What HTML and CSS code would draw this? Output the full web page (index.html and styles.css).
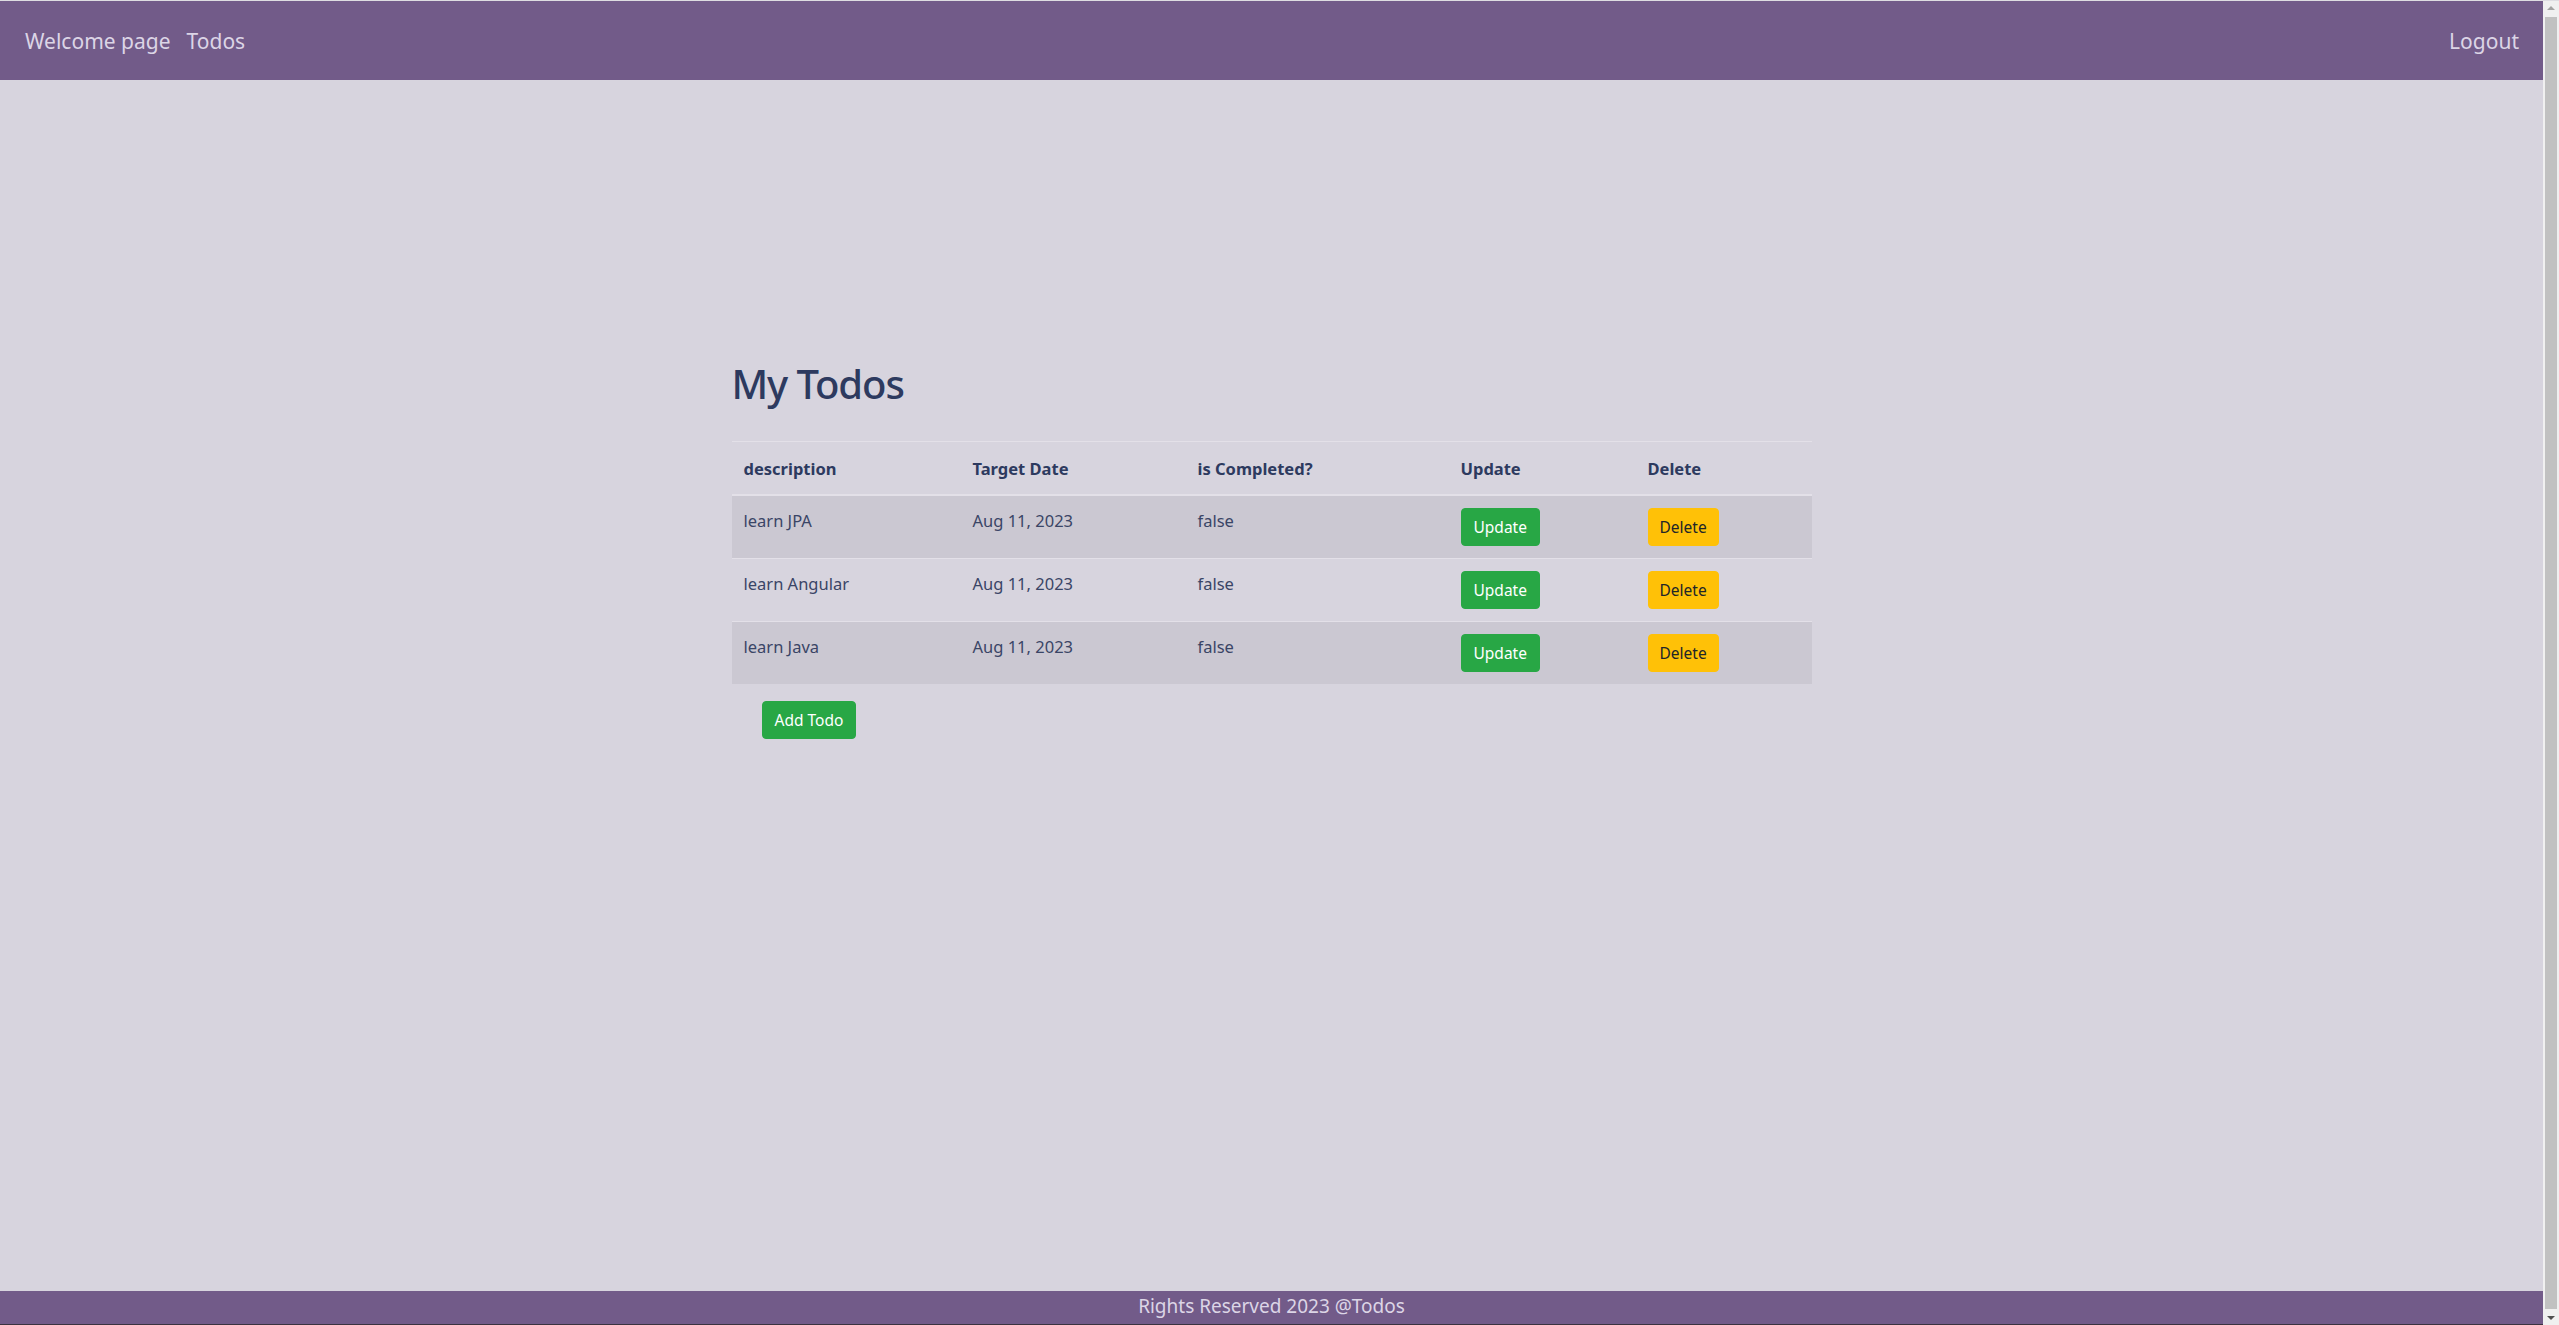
FILE: index.html
```html
<!DOCTYPE html>
<html lang="en">
<head>
<meta charset="utf-8">
<title>Todos</title>
<link rel="stylesheet" href="styles.css">
</head>
<body>
<div class="window">
  <div class="page">
    <header class="navbar">
      <nav class="nav-left">
        <a class="nav-link" href="#">Welcome page</a>
        <a class="nav-link" href="#">Todos</a>
      </nav>
      <a class="nav-link" href="#">Logout</a>
    </header>
    <main class="main">
      <div class="container">
        <h1 class="title">My Todos</h1>
        <table class="todo-table">
          <thead>
            <tr>
              <th class="c1">description</th>
              <th class="c2">Target Date</th>
              <th class="c3">is Completed?</th>
              <th class="c4">Update</th>
              <th class="c5">Delete</th>
            </tr>
          </thead>
          <tbody>
            <tr class="odd">
              <td>learn JPA</td>
              <td>Aug 11, 2023</td>
              <td>false</td>
              <td><button class="btn btn-success">Update</button></td>
              <td><button class="btn btn-warning">Delete</button></td>
            </tr>
            <tr>
              <td>learn Angular</td>
              <td>Aug 11, 2023</td>
              <td>false</td>
              <td><button class="btn btn-success">Update</button></td>
              <td><button class="btn btn-warning">Delete</button></td>
            </tr>
            <tr class="odd">
              <td>learn Java</td>
              <td>Aug 11, 2023</td>
              <td>false</td>
              <td><button class="btn btn-success">Update</button></td>
              <td><button class="btn btn-warning">Delete</button></td>
            </tr>
          </tbody>
        </table>
        <button class="btn btn-success add-btn">Add Todo</button>
      </div>
    </main>
    <footer class="footer">Rights Reserved 2023 @Todos</footer>
  </div>
  <div class="scrollbar">
    <div class="arrow arrow-up"></div>
    <div class="thumb"></div>
    <div class="arrow arrow-down"></div>
  </div>
</div>
</body>
</html>
```

FILE: styles.css
```css
html, body {
  margin: 0;
  padding: 0;
  height: 1325px;
  overflow: hidden;
}

body {
  font-family: "Noto Sans", "Open Sans", "DejaVu Sans", sans-serif;
  color: #2d3a5f;
  background: #d7d4de;
}

.window {
  display: flex;
  height: 1325px;
  border-top: 1px solid #dedde2;
  box-sizing: border-box;
}

.page {
  flex: 1;
  display: flex;
  flex-direction: column;
  min-width: 0;
}

.navbar {
  height: 79px;
  background: #725b89;
  display: flex;
  align-items: center;
  justify-content: space-between;
  padding: 0 24px 0 25px;
  flex-shrink: 0;
}

.nav-left {
  display: flex;
  gap: 16px;
}

.nav-link {
  color: #dcd5e6;
  text-decoration: none;
  font-size: 21px;
  line-height: 30px;
}

.main {
  flex: 1;
}

.container {
  width: 1080px;
  margin: 0 auto;
  padding-top: 280px;
}

.title {
  font-size: 40px;
  font-weight: 500;
  line-height: 48px;
  letter-spacing: -1.1px;
  margin: 0 0 33px;
  color: #2d3a5f;
}

.todo-table {
  width: 1080px;
  table-layout: fixed;
  border-collapse: collapse;
  font-size: 16.5px;
  line-height: 26px;
}

.todo-table th,
.todo-table td {
  box-sizing: border-box;
  text-align: left;
  vertical-align: top;
  padding: 12px;
  border-top: 1px solid #e3e0e8;
}

.todo-table th {
  font-weight: 700;
  padding-top: 14px;
  border-bottom: 2px solid #e3e0e8;
}

.todo-table td {
  color: #3a4566;
}

.todo-table tr.odd td {
  background: #cbc8d2;
}

.c1 { width: 229px; }
.c2 { width: 225px; }
.c3 { width: 263px; }
.c4 { width: 187px; }
.c5 { width: 176px; }

.btn {
  font-family: inherit;
  font-size: 15.5px;
  line-height: 24px;
  padding: 6px 12px;
  border: 1px solid transparent;
  border-radius: 4px;
  cursor: pointer;
  vertical-align: top;
}

.btn-success {
  background: #28a745;
  border-color: #28a745;
  color: #ffffff;
}

.btn-warning {
  background: #ffc107;
  border-color: #ffc107;
  color: #212529;
}

.btn-warning {
  padding: 6px 11px;
}

.add-btn {
  margin: 17px 0 0 30px;
}

.footer {
  height: 34px;
  background: #725b89;
  color: #dcd5e6;
  text-align: center;
  font-size: 19px;
  line-height: 30px;
  border-bottom: 1px solid #3a3340;
  box-sizing: border-box;
  flex-shrink: 0;
}

.scrollbar {
  width: 16px;
  background: #f0f0f0;
  display: flex;
  flex-direction: column;
  align-items: center;
  flex-shrink: 0;
}

.thumb {
  flex: 1;
  width: 12px;
  background: #c1c1c1;
  margin: 2px 0;
}

.arrow {
  width: 0;
  height: 0;
  border-left: 4px solid transparent;
  border-right: 4px solid transparent;
  margin: 5px 0;
}

.arrow-up {
  border-bottom: 4px solid #a3a3a3;
}

.arrow-down {
  border-top: 4px solid #505050;
}
```
